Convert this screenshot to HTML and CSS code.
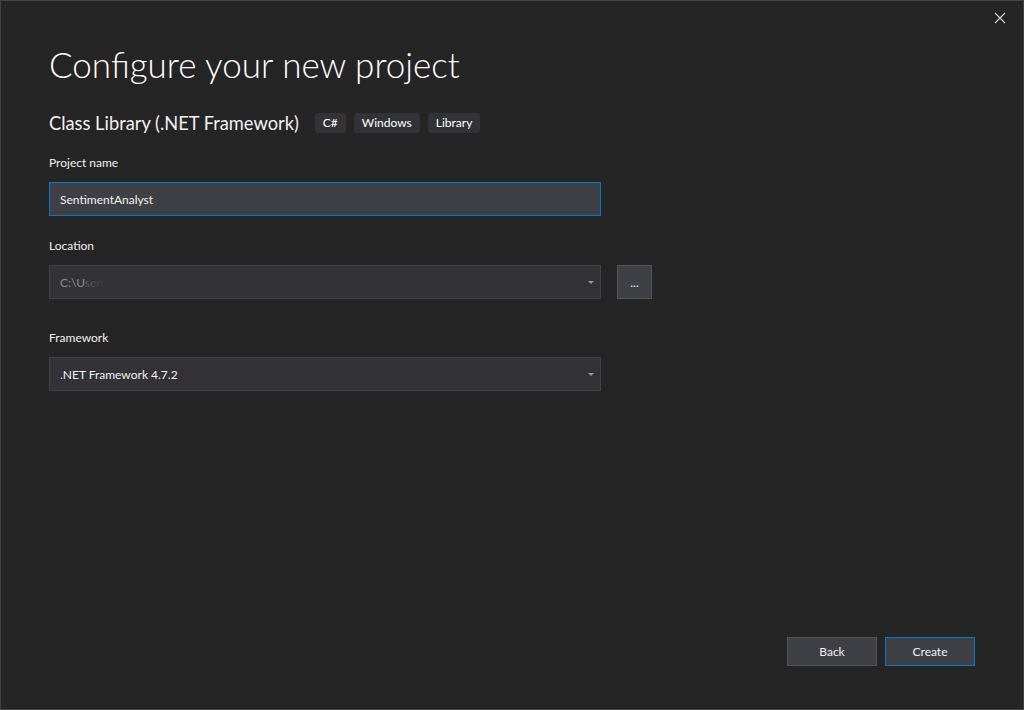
FILE: index.html
```html
<!DOCTYPE html>
<html lang="en">

<head>
    <meta charset="UTF-8">
    <meta name="viewport" content="width=device-width, initial-scale=1.0">
    <title>Configure your new project</title>
    <link rel="stylesheet" href="styles.css">
</head>

<body>
    <div class="dialog">
        <button class="close-btn" aria-label="Close">
            <svg width="12" height="12" viewBox="0 0 12 12">
                <path d="M1 1 L11 11 M11 1 L1 11" stroke="#d0d0d0" stroke-width="1.2" fill="none" />
            </svg>
        </button>

        <div class="content">
            <h1 class="title">Configure your new project</h1>

            <div class="template-row">
                <span class="template-name">Class Library (.NET Framework)</span>
                <span class="tag">C#</span>
                <span class="tag">Windows</span>
                <span class="tag">Library</span>
            </div>

            <div class="field">
                <label for="projectName">Project name</label>
                <input id="projectName" class="text-input" type="text" value="SentimentAnalyst">
            </div>

            <div class="field location">
                <label>Location</label>
                <div class="field-row">
                    <div class="combo">
                        <span class="combo-text faded">C:\U<span class="fade">sers</span></span>
                        <span class="chevron"></span>
                    </div>
                    <button class="browse-btn">...</button>
                </div>
            </div>

            <div class="field framework">
                <label>Framework</label>
                <div class="combo">
                    <span class="combo-text">.NET Framework 4.7.2</span>
                    <span class="chevron"></span>
                </div>
            </div>
        </div>

        <div class="footer">
            <button class="btn">Back</button>
            <button class="btn primary">Create</button>
        </div>
    </div>
</body>

</html>
```

FILE: styles.css
```css
body {
    margin: 0;
    background-color: #252526;
    font-family: "Segoe UI", Lato, "Noto Sans", sans-serif;
    color: #f1f1f1;
}

.dialog {
    position: relative;
    width: 1024px;
    height: 710px;
    box-sizing: border-box;
    border: 1px solid #434346;
    background-color: #252526;
    display: flex;
    flex-direction: column;
    justify-content: space-between;
}

.close-btn {
    position: absolute;
    top: 11px;
    right: 17px;
    width: 12px;
    height: 12px;
    padding: 0;
    border: none;
    background: none;
    display: flex;
}

.content {
    padding: 38px 0 0 48px;
    display: flex;
    flex-direction: column;
}

.title {
    margin: 0;
    font-size: 35px;
    font-weight: 300;
    line-height: 50px;
    color: #ffffff;
}

.template-row {
    display: flex;
    align-items: center;
    margin-top: 21px;
    height: 26px;
}

.template-name {
    font-size: 18.3px;
    font-weight: 400;
    margin-right: 16px;
}

.tag {
    background-color: #333337;
    border-radius: 3px;
    font-size: 12px;
    height: 20px;
    line-height: 20px;
    padding: 0 8px;
    margin-right: 8px;
    color: #ffffff;
}

.field {
    display: flex;
    flex-direction: column;
    margin-top: 18px;
}

.field.location {
    margin-top: 21px;
}

.field.framework {
    margin-top: 30px;
}

.field label {
    font-size: 12px;
    line-height: 18px;
    margin-bottom: 10px;
}

.field-row {
    display: flex;
    gap: 16px;
}

.text-input {
    width: 552px;
    height: 34px;
    box-sizing: border-box;
    background-color: #3f3f46;
    border: 1px solid #007acc;
    color: #f1f1f1;
    font-family: inherit;
    font-size: 12px;
    padding: 0 10px;
    margin: 0;
    outline: none;
}

.combo {
    width: 552px;
    height: 34px;
    box-sizing: border-box;
    background-color: #333337;
    border: 1px solid #434346;
    display: flex;
    align-items: center;
    justify-content: space-between;
    padding: 0 6px 0 10px;
    font-size: 12px;
}

.combo-text.faded {
    color: #8a8a8e;
}

.fade {
    background: linear-gradient(to right, #6a6a6e, #333337);
    -webkit-background-clip: text;
    background-clip: text;
    color: transparent;
}

.chevron {
    width: 0;
    height: 0;
    border-left: 3px solid transparent;
    border-right: 3px solid transparent;
    border-top: 3px solid #999999;
}

.browse-btn {
    width: 35px;
    height: 34px;
    box-sizing: border-box;
    background-color: #3f3f46;
    border: 1px solid #555558;
    color: #f1f1f1;
    font-family: inherit;
    font-size: 12px;
    padding: 0;
    line-height: 34px;
}

.footer {
    display: flex;
    justify-content: flex-end;
    gap: 8px;
    padding: 0 48px 43px 0;
}

.btn {
    width: 90px;
    height: 29px;
    box-sizing: border-box;
    background-color: #3f3f46;
    border: 1px solid #555558;
    color: #f1f1f1;
    font-family: inherit;
    font-size: 12px;
    padding: 0;
}

.btn.primary {
    border-color: #007acc;
}
```
